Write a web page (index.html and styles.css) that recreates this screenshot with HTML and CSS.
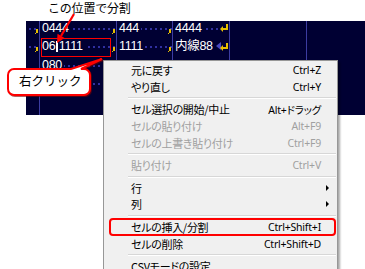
FILE: index.html
```html
<!DOCTYPE html>
<html lang="ja">
<head>
  <meta charset="UTF-8" />
  <title>セルの挿入/分割</title>
  <link rel="stylesheet" href="styles.css">
</head>
<body>
  <div class="page">

    <div class="caption">この位置で分割</div>

    <!-- Editor -->
    <div class="editor">
      <div class="row">
        <div class="cell gutter dots"><i class="tab"></i></div>
        <div class="cell c1 dots"><span class="txt">0444</span><i class="tab"></i></div>
        <div class="cell c2 dots"><span class="txt">444</span><i class="tab"></i></div>
        <div class="cell c3 dots"><span class="txt">4444</span><i class="eol"></i></div>
        <div class="cell c4"></div>
        <div class="cell c5"></div>
      </div>
      <div class="row">
        <div class="cell gutter dots"><i class="tab"></i></div>
        <div class="cell c1 dots"><span class="txt">06<b class="caret"></b>1111</span><i class="tab"></i></div>
        <div class="cell c2 dots"><span class="txt">1111</span><i class="tab"></i></div>
        <div class="cell c3"><span class="txt">内線88</span><span class="end"><i class="eof"></i><i class="eol"></i></span></div>
        <div class="cell c4"></div>
        <div class="cell c5"></div>
      </div>
      <div class="row">
        <div class="cell gutter"></div>
        <div class="cell c1 dots"><span class="txt">080</span></div>
        <div class="cell c2"></div>
        <div class="cell c3"></div>
        <div class="cell c4"></div>
        <div class="cell c5"></div>
      </div>
      <div class="row">
        <div class="cell gutter dots"></div>
        <div class="cell c1 dots"></div>
        <div class="cell c2"></div>
        <div class="cell c3"></div>
        <div class="cell c4"></div>
        <div class="cell c5"></div>
      </div>
      <div class="row last">
        <div class="cell gutter"></div>
        <div class="cell c1"></div>
        <div class="cell c2"></div>
        <div class="cell c3"></div>
        <div class="cell c4"></div>
        <div class="cell c5"></div>
      </div>
    </div>

    <!-- Annotations -->
    <div class="mark-box"></div>

    <svg class="arrow" width="90" height="50" viewBox="0 0 90 50">
      <line x1="74" y1="14" x2="61" y2="36" stroke="#ff0000" stroke-width="2.2" />
      <polygon points="57,43 64.5,38 57.5,33.8" fill="#ff0000" />
    </svg>

    <div class="callout">
      <svg class="callout-shape" width="100" height="40" viewBox="0 0 100 40">
        <path d="M7,11 H64 L95,1 L74,11 H77 A6,6 0 0 1 83,17 V31 A6,6 0 0 1 77,37 H7 A6,6 0 0 1 1,31 V17 A6,6 0 0 1 7,11 Z"
              fill="#fff" stroke="#ff0000" stroke-width="2" />
      </svg>
      <span class="callout-text">右クリック</span>
    </div>

    <!-- Context menu -->
    <div class="menu">
      <div class="item"><span class="label">元に戻す</span><span class="key">Ctrl+Z</span><span class="sub"></span></div>
      <div class="item"><span class="label">やり直し</span><span class="key">Ctrl+Y</span><span class="sub"></span></div>
      <div class="sep"></div>
      <div class="item"><span class="label">セル選択の開始/中止</span><span class="key">Alt+ドラッグ</span><span class="sub"></span></div>
      <div class="item disabled"><span class="label">セルの貼り付け</span><span class="key">Alt+F9</span><span class="sub"></span></div>
      <div class="item disabled"><span class="label">セルの上書き貼り付け</span><span class="key">Ctrl+F9</span><span class="sub"></span></div>
      <div class="sep"></div>
      <div class="item disabled"><span class="label">貼り付け</span><span class="key">Ctrl+V</span><span class="sub"></span></div>
      <div class="sep"></div>
      <div class="item"><span class="label">行</span><span class="key"></span><span class="sub"><i class="tri"></i></span></div>
      <div class="item"><span class="label">列</span><span class="key"></span><span class="sub"><i class="tri"></i></span></div>
      <div class="sep"></div>
      <div class="item hl"><span class="label">セルの挿入/分割</span><span class="key">Ctrl+Shift+I</span><span class="sub"></span></div>
      <div class="item"><span class="label">セルの削除</span><span class="key">Ctrl+Shift+D</span><span class="sub"></span></div>
      <div class="sep"></div>
      <div class="item"><span class="label">CSVモードの設定...</span><span class="key"></span><span class="sub"></span></div>
    </div>

  </div>
</body>
</html>
```

FILE: styles.css
```css
:root {
  --ed-bg: #000033;
  --ed-line: #3c3ca0;
  --ed-dot: #3030a0;
  --ed-mark: #e8c000;
  --red: #ff0000;
  --menu-bg: #f0f0f0;
  --menu-border: #979797;
  --muted: #a0a0a0;
}

* {
  margin: 0;
  padding: 0;
  box-sizing: border-box;
}

body {
  background: #fff;
  font-family: "Noto Sans CJK JP", "Noto Sans", sans-serif;
  color: #000;
}

.page {
  position: relative;
  width: 365px;
  height: 269px;
  overflow: hidden;
}

.caption {
  height: 21px;
  padding-left: 48px;
  font-size: 12px;
  line-height: 16px;
  letter-spacing: -0.2px;
}

/* editor */

.editor {
  margin-left: 26px;
  height: 94px;
  background: var(--ed-bg);
  font-family: "Liberation Sans", "Noto Sans CJK JP", sans-serif;
  font-size: 12.5px;
  color: #fff;
}

.row {
  display: flex;
  height: 18.3px;
}

.row.last {
  height: 20.8px;
}

.cell {
  display: flex;
  justify-content: space-between;
  align-items: flex-start;
  height: 100%;
  border-left: 1px solid var(--ed-line);
}

.gutter { width: 13px; border-left: none; justify-content: flex-end; }
.c1 { width: 77px; }
.c2 { width: 56px; }
.c3 { width: 57px; }
.c4 { width: 77px; }
.c5 { flex: 1; }

.dots {
  background-image: linear-gradient(90deg, var(--ed-dot) 2px, transparent 2px);
  background-size: 5px 2px;
  background-repeat: repeat-x;
  background-position: 3px 7px;
}

.txt {
  display: flex;
  align-items: center;
  height: 14px;
  padding: 0 2px;
  background: var(--ed-bg);
  letter-spacing: -0.3px;
  line-height: 14px;
}

.caret {
  display: inline-block;
  width: 1.5px;
  height: 11px;
  margin: 1px 1px 0;
  background: #fff;
}

.tab {
  position: relative;
  width: 2px;
  height: 4px;
  margin: 8px 1px 0 0;
  background: var(--ed-mark);
}

.tab::after {
  content: '';
  position: absolute;
  left: -1px;
  bottom: -1px;
  width: 1px;
  height: 1px;
  background: var(--ed-mark);
}

.end {
  display: flex;
  align-items: center;
  margin-top: 3px;
}

.eof {
  width: 0;
  height: 0;
  margin-right: 1px;
  border-top: 4px solid transparent;
  border-bottom: 4px solid transparent;
  border-right: 5px solid #4848c0;
}

.eol {
  position: relative;
  width: 6px;
  height: 6px;
  margin: 3px 1px 0 0;
  border-right: 2px solid var(--ed-mark);
  border-bottom: 2px solid var(--ed-mark);
}

.end .eol {
  margin-top: 0;
}

.eol::before {
  content: '';
  position: absolute;
  left: -2px;
  bottom: -4px;
  border-top: 3px solid transparent;
  border-bottom: 3px solid transparent;
  border-right: 3px solid var(--ed-mark);
}

/* annotations */

.mark-box {
  position: absolute;
  left: 41px;
  top: 38px;
  width: 70px;
  height: 19px;
  border: 1.5px solid var(--red);
}

.arrow {
  position: absolute;
  left: 0;
  top: 0;
}

.callout {
  position: absolute;
  left: 7px;
  top: 58px;
  width: 100px;
  height: 40px;
  z-index: 5;
}

.callout-shape {
  position: absolute;
  left: 0;
  top: 0;
  filter: drop-shadow(1px 1px 0 rgba(120, 0, 0, 0.6));
}

.callout-text {
  position: absolute;
  left: 12px;
  top: 15px;
  font-size: 12.5px;
  line-height: 16px;
}

/* context menu */

.menu {
  position: absolute;
  left: 103px;
  top: 60px;
  width: 235px;
  padding: 1px 0;
  background: var(--menu-bg);
  border: 1px solid var(--menu-border);
  box-shadow: 2px 2px 2px rgba(0, 0, 0, 0.35);
  font-size: 11px;
  font-feature-settings: "palt";
}

.item {
  position: relative;
  display: flex;
  align-items: center;
  height: 16.6px;
  padding: 0 6px 0 27px;
}

.item .label {
  flex: 1;
  letter-spacing: -0.3px;
}

.item .key {
  font-family: "Noto Sans", "Noto Sans CJK JP", sans-serif;
  font-size: 10.5px;
  letter-spacing: -0.2px;
}

.item .sub {
  width: 10px;
  display: flex;
  align-items: center;
  justify-content: flex-end;
}

.tri {
  width: 0;
  height: 0;
  margin-right: 2px;
  border-top: 3px solid transparent;
  border-bottom: 3px solid transparent;
  border-left: 3px solid #000;
}

.item.disabled {
  color: var(--muted);
}

.item.hl::after {
  content: '';
  position: absolute;
  left: 5px;
  right: 1px;
  top: -1px;
  bottom: -1px;
  border: 2px solid var(--red);
  border-radius: 4px;
}

.sep {
  height: 6px;
  margin-left: 24px;
  margin-right: 1px;
  display: flex;
  flex-direction: column;
  justify-content: center;
}

.sep::before {
  content: '';
  height: 1px;
  background: #d7d7d7;
  border-bottom: 1px solid #fff;
  box-sizing: content-box;
}
```
